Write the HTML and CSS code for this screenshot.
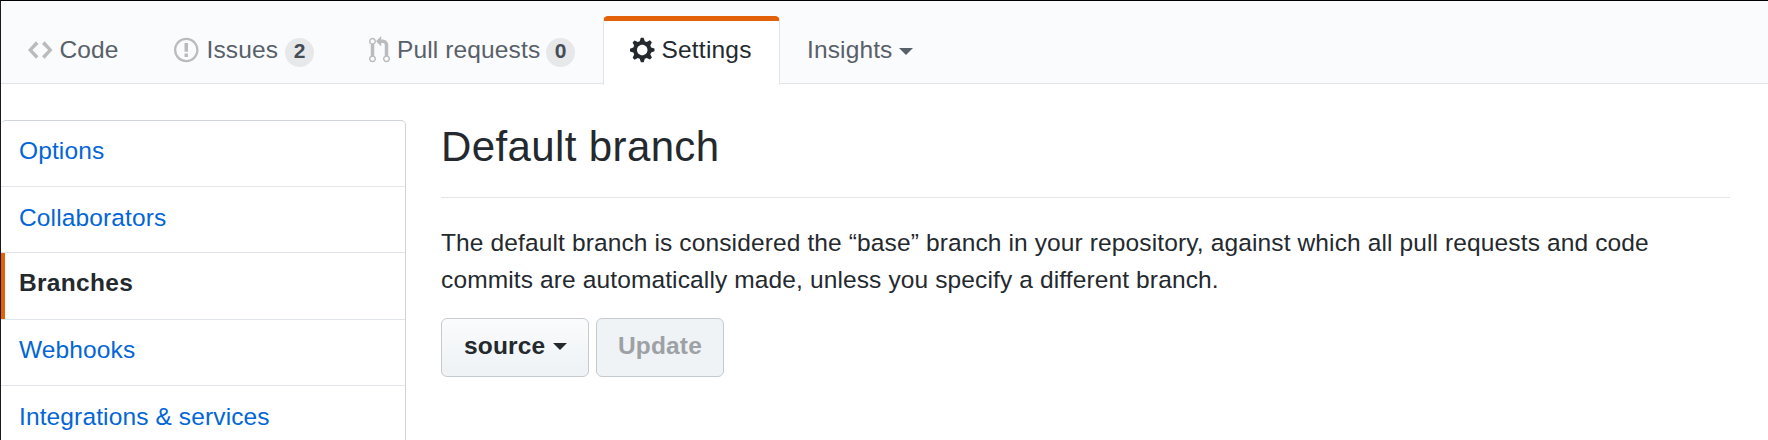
FILE: index.html
```html
<!DOCTYPE html>
<html lang="en">
<head>
<meta charset="utf-8">
<title>Branches</title>
<link rel="stylesheet" href="styles.css">
</head>
<body>
<div class="page">
  <nav class="tabs">
    <a class="tab tab-code"><svg class="icon" width="24.5" height="28" viewBox="0 0 14 16"><path d="M9.5 3L8 4.5 11.500 8 8 11.500 9.500 13 14 8 9.500 3zm-5 0L0 8l4.500 5L6 11.500 2.500 8 6 4.500 4.500 3z"/></svg><span>Code</span></a>
    <a class="tab tab-issues"><svg class="icon" width="24.5" height="28" viewBox="0 0 14 16"><path fill-rule="evenodd" d="M7 2.300c3.140 0 5.700 2.560 5.700 5.700s-2.560 5.700-5.700 5.700A5.710 5.710 0 0 1 1.300 8c0-3.140 2.560-5.700 5.700-5.700zM7 1C3.140 1 0 4.140 0 8s3.140 7 7 7 7-3.140 7-7-3.140-7-7-7zm1 3H6v5h2V4zm0 6H6v2h2v-2z"/></svg><span>Issues</span><span class="count">2</span></a>
    <a class="tab tab-pulls"><svg class="icon" width="21" height="28" viewBox="0 0 12 16"><path fill-rule="evenodd" d="M11 11.280V5c-.03-.78-.34-1.470-.94-2.060C9.460 2.350 8.780 2.030 8 2H7V0L4 3l3 3V4h1c.27.02.48.11.69.31.21.2.3.42.31.69v6.280A1.993 1.993 0 0 0 10 15a1.993 1.993 0 0 0 1-3.720zm-1 2.920c-.66 0-1.200-.55-1.200-1.200 0-.65.55-1.200 1.200-1.200.65 0 1.200.55 1.200 1.200 0 .65-.55 1.200-1.200 1.200zM4 3c0-1.110-.89-2-2-2a1.993 1.993 0 0 0-1 3.720v6.560A1.993 1.993 0 0 0 2 15a1.993 1.993 0 0 0 1-3.720V4.720c.59-.34 1-.98 1-1.720zm-.8 10c0 .66-.55 1.200-1.200 1.200-.65 0-1.200-.55-1.200-1.200 0-.65.55-1.200 1.200-1.200.65 0 1.200.55 1.200 1.200zM2 4.200C1.340 4.200.8 3.650.8 3c0-.65.55-1.200 1.200-1.200.65 0 1.200.55 1.200 1.200 0 .65-.55 1.200-1.200 1.200z"/></svg><span>Pull requests</span><span class="count">0</span></a>
    <a class="tab tab-settings"><svg class="icon" width="24.5" height="28" viewBox="0 0 14 16"><path fill-rule="evenodd" d="M14 8.770v-1.600l-1.940-.64-.45-1.090.88-1.840-1.130-1.130-1.810.91-1.090-.45-.69-1.920h-1.600l-.63 1.940-1.110.45-1.840-.88-1.130 1.130.91 1.810-.45 1.090L0 7.230v1.590l1.940.64.45 1.090-.88 1.840 1.130 1.130 1.810-.91 1.090.45.69 1.920h1.590l.63-1.940 1.110-.45 1.840.88 1.130-1.130-.92-1.810.47-1.090L14 8.750v.02zM7 11c-1.660 0-3-1.340-3-3s1.340-3 3-3 3 1.340 3 3-1.340 3-3 3z"/></svg><span>Settings</span></a>
    <a class="tab tab-insights"><span>Insights</span><i class="caret"></i></a>
  </nav>
  <div class="content">
    <aside class="menu">
      <a class="menu-item first">Options</a>
      <a class="menu-item">Collaborators</a>
      <a class="menu-item selected">Branches</a>
      <a class="menu-item webhooks">Webhooks</a>
      <a class="menu-item">Integrations &amp; services</a>
    </aside>
    <main class="main">
      <h2 class="heading">Default branch</h2>
      <p class="description">The default branch is considered the “base” branch in your repository, against which all pull requests and code<br>commits are automatically made, unless you specify a different branch.</p>
      <div class="actions">
        <button class="button">source<i class="caret"></i></button>
        <button class="button update" disabled>Update</button>
      </div>
    </main>
  </div>
</div>
</body>
</html>
```
FILE: styles.css
```css
* { box-sizing: border-box; }
body {
  margin: 0;
  background: #fff;
  color: #24292e;
  font: 24.5px/37px "Liberation Sans", Arial, sans-serif;
  letter-spacing: 0.125px;
}
.page {
  height: 440px;
  overflow: hidden;
  border-top: 1px solid #000;
  border-left: 1px solid #1b1b1b;
}
.tabs {
  display: flex;
  height: 83px;
  padding-top: 15px;
  background: #fafbfc;
  border-bottom: 1px solid #e1e4e8;
}
.tab {
  display: flex;
  flex: none;
  align-items: flex-start;
  height: 67px;
  padding: 15px 0 0 27px;
  color: #586069;
  white-space: nowrap;
}
.tab-code { width: 146px; }
.tab-issues { width: 195px; }
.tab-issues .icon { margin-right: 8px; }
.tab-issues .count { margin-left: 7px; }
.tab-pulls { width: 261px; }
.tab-pulls .count { margin-left: 6px; }
.tab-settings {
  width: 177px;
  height: 69px;
  padding: 10px 0 0 26px;
  background: #fff;
  color: #24292e;
  border: 1px solid #e1e4e8;
  border-top: 5px solid #e36209;
  border-bottom: 0;
  border-radius: 5px 5px 0 0;
  letter-spacing: 0.2px;
}
.tab-insights { padding-left: 27px; }
.icon {
  flex: none;
  margin: 5px 7px 0 0;
  fill: #babbbc;
}
.tab-settings .icon { fill: #24292e; }
.count {
  min-width: 29px;
  height: 29px;
  margin: 7px 0 0 8px;
  border-radius: 15px;
  background: #e7e8ea;
  color: #444d56;
  font-size: 21px;
  font-weight: 700;
  line-height: 26px;
  text-align: center;
}
.caret {
  width: 0;
  height: 0;
  border: 7px solid transparent;
  border-top-color: currentColor;
  border-bottom: 0;
}
.tab .caret { margin: 17px 0 0 7px; }
.content {
  display: flex;
  align-items: flex-start;
  padding-top: 36px;
}
.menu {
  flex: none;
  width: 405px;
  border: 1px solid #d1d5da;
  border-left: 0;
  border-radius: 5px 5px 0 0;
}
.menu-item {
  display: block;
  height: 66px;
  padding: 12px 0 0 18px;
  border-bottom: 1px solid #e1e4e8;
  color: #0366d6;
}
.menu-item.first, .menu-item.webhooks { padding-top: 11px; }
.menu-item.selected {
  height: 67px;
  padding-top: 11px;
  color: #24292e;
  font-weight: 700;
  letter-spacing: 0.3px;
  background: linear-gradient(#e36209, #e36209) 0 0 / 4px 100% no-repeat;
}
.main {
  width: 1289px;
  margin-left: 35px;
}
.heading {
  height: 78px;
  margin: 0 0 26px;
  border-bottom: 1px solid #e1e4e8;
  font-size: 42px;
  font-weight: 400;
  line-height: 53px;
  letter-spacing: 0.38px;
}
.description { margin: 0; white-space: nowrap; }
.actions {
  display: flex;
  gap: 7px;
  margin-top: 20px;
}
.button {
  display: flex;
  width: 148px;
  height: 59px;
  padding: 8px 0 0 22px;
  border: 1px solid #c6cbd0;
  border-radius: 6px;
  background: linear-gradient(#fafbfc, #eff3f6 90%);
  color: #24292e;
  font: inherit;
  font-weight: 700;
  letter-spacing: 0.15px;
}
.button .caret { margin: 16px 0 0 8px; }
.button.update {
  width: 128px;
  padding-left: 21px;
  background: #eff3f6;
  color: #9da1a5;
}
```
